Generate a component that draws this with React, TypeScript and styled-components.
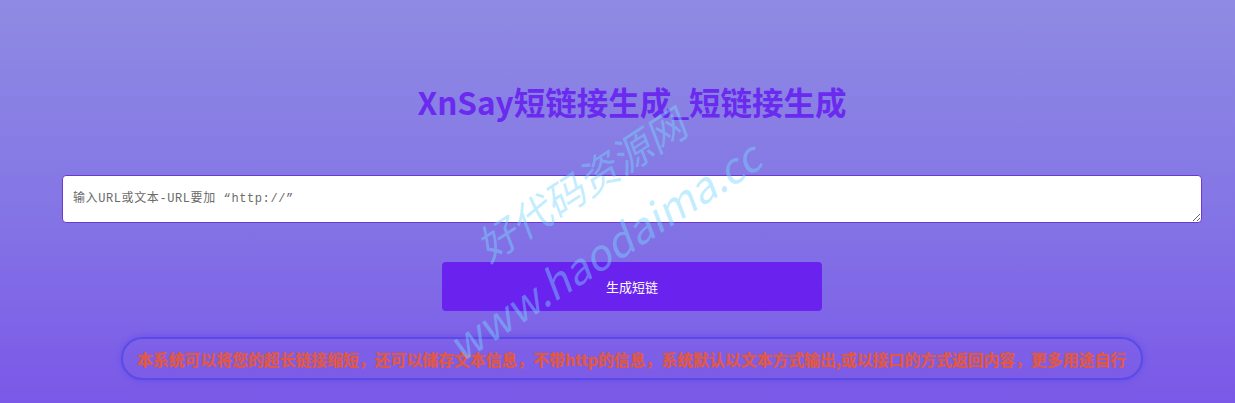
import styled, { createGlobalStyle } from "styled-components";

const GlobalStyle = createGlobalStyle`
  html, body {
    margin: 0;
    padding: 0;
  }
  body {
    font-family: "Noto Sans CJK SC", "Noto Sans", sans-serif;
  }
  * {
    box-sizing: border-box;
  }
`;

const Page = styled.div`
  position: relative;
  min-height: 100vh;
  overflow: hidden;
  background: linear-gradient(180deg, #8f8be3 0%, #8476e5 50%, #7b58e8 100%);
`;

const Container = styled.div`
  display: flex;
  flex-direction: column;
  align-items: center;
  padding: 80px 33px 0 62px;
`;

const Title = styled.h1`
  margin: 0;
  font-size: 31.5px;
  line-height: 42px;
  font-weight: 700;
  color: #6b2bef;
`;

const InputArea = styled.textarea`
  display: block;
  width: 100%;
  height: 48px;
  margin-top: 53px;
  padding: 15px 10px;
  border: 1px solid #6a3ad2;
  border-radius: 4px;
  background: #fff;
  font-family: "Liberation Mono", "Noto Sans CJK SC", monospace;
  font-size: 12px;
  line-height: 16px;
  letter-spacing: 0.6px;
  color: #333;
  outline: none;
  resize: vertical;

  &::placeholder {
    color: #6b6b6b;
  }
`;

const SubmitButton = styled.button`
  width: 380px;
  height: 49px;
  margin-top: 39px;
  border: none;
  border-radius: 4px;
  background: #6a22ee;
  color: #fff;
  font-family: "Noto Sans CJK SC", sans-serif;
  font-size: 13px;
  cursor: pointer;
`;

const Notice = styled.div`
  width: 1022px;
  height: 43px;
  margin-top: 26px;
  padding: 0 8px 0 14px;
  display: flex;
  align-items: center;
  border: 2px solid #5c4ae8;
  border-radius: 22px;
  box-shadow: 0 0 6px rgba(80, 70, 230, 0.6);
  overflow: hidden;
  white-space: nowrap;
  color: #e4583f;
  font-size: 16px;
  font-weight: 700;
  letter-spacing: -0.15px;
  text-shadow: 0 0 1px rgba(230, 90, 60, 0.5);
`;

const Watermark = styled.div<{ $left: number; $top: number; $size: number }>`
  position: absolute;
  left: ${(p) => p.$left}px;
  top: ${(p) => p.$top}px;
  transform: rotate(-33deg) skewX(-12deg);
  transform-origin: left bottom;
  font-family: "Noto Sans CJK SC", "DejaVu Sans", sans-serif;
  font-size: ${(p) => p.$size}px;
  line-height: 1;
  white-space: nowrap;
  color: rgba(120, 215, 255, 0.45);
  pointer-events: none;
`;

export default function App() {
  return (
    <Page>
      <GlobalStyle />
      <Container>
        <Title>XnSay短链接生成_短链接生成</Title>
        <InputArea placeholder="输入URL或文本-URL要加 “http://”" />
        <SubmitButton>生成短链</SubmitButton>
        <Notice>
          本系统可以将您的超长链接缩短，还可以储存文本信息，不带http的信息，系统默认以文本方式输出,或以接口的方式返回内容，更多用途自行
        </Notice>
      </Container>
      <Watermark $left={490} $top={226} $size={40}>
        好代码资源网
      </Watermark>
      <Watermark $left={462} $top={324} $size={42}>
        www.haodaima.cc
      </Watermark>
    </Page>
  );
}
